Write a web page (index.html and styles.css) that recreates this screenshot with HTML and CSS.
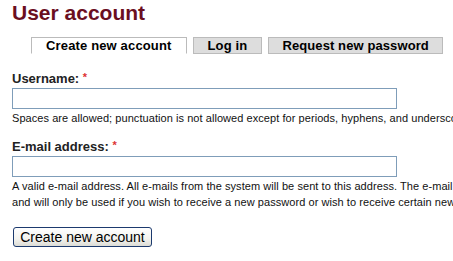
FILE: index.html
```html
<!DOCTYPE html>
<html>
<head>
<meta charset="utf-8">
<link rel="stylesheet" href="styles.css">
</head>
<body>
<div class="page">
  <h1 class="title">User account</h1>
  <ul class="tabs">
    <li class="tab active">Create new account</li>
    <li class="tab">Log in</li>
    <li class="tab tab-last">Request new password</li>
  </ul>
  <form class="form">
    <div class="field">
      <label class="label">Username: <span class="req">*</span></label>
      <input class="text-input" type="text">
      <div class="desc">Spaces are allowed; punctuation is not allowed except for periods, hyphens, and underscores.</div>
    </div>
    <div class="field field-email">
      <label class="label">E-mail address: <span class="req">*</span></label>
      <input class="text-input" type="text">
      <div class="desc">A valid e-mail address. All e-mails from the system will be sent to this address. The e-mail address is not made public<br>and will only be used if you wish to receive a new password or wish to receive certain news or notifications by e-mail.</div>
    </div>
    <button class="submit" type="button">Create new account</button>
  </form>
</div>
</body>
</html>
```
FILE: styles.css
```css
html, body {
  margin: 0;
  padding: 0;
  background: #fff;
  overflow: hidden;
}
body {
  font-family: "Liberation Sans", Arial, sans-serif;
  color: #000;
  width: 453px;
  height: 261px;
}
.page {
  padding: 0 0 0 12px;
  white-space: nowrap;
}
.title {
  margin: 0;
  font-size: 21px;
  line-height: 26px;
  font-weight: bold;
  color: #6b0f1f;
}
.tabs {
  list-style: none;
  margin: 11px 0 0 19px;
  padding: 0;
  display: flex;
  gap: 6px;
}
.tab {
  font-size: 13px;
  font-weight: bold;
  line-height: 15px;
  letter-spacing: 0.15px;
  padding: 0 14px;
  border: 1px solid #bbb;
  background: #ddd;
  color: #000;
}
.tab-last {
  padding: 0 13px;
  letter-spacing: 0.1px;
}
.tab.active {
  background: #fff;
  border-bottom-color: #fff;
}
.form {
  margin: 17px 0 0 0;
}
.label {
  display: block;
  font-size: 13px;
  font-weight: bold;
  line-height: 16px;
  color: #222;
}
.req {
  color: #d33;
  font-size: 11px;
  vertical-align: top;
  line-height: 13px;
}
.text-input {
  display: block;
  box-sizing: border-box;
  width: 385px;
  height: 21px;
  margin: 1px 0 0 0;
  padding: 0;
  border: 1px solid #7f9db9;
  background: #fff;
}
.desc {
  margin-top: 1px;
  font-size: 11px;
  line-height: 16px;
  letter-spacing: 0.06px;
  color: #111;
}
.field-email {
  margin-top: 13px;
}
.submit {
  display: block;
  margin: 17px 0 0 1px;
  box-sizing: border-box;
  width: 139px;
  height: 20px;
  padding: 0;
  font-family: "Liberation Sans", Arial, sans-serif;
  font-size: 14px;
  color: #000;
  border: 1px solid #1c3a6e;
  border-radius: 3px;
  background: linear-gradient(#ffffff, #f3f3ef 60%, #dcdcd5);
}
```
